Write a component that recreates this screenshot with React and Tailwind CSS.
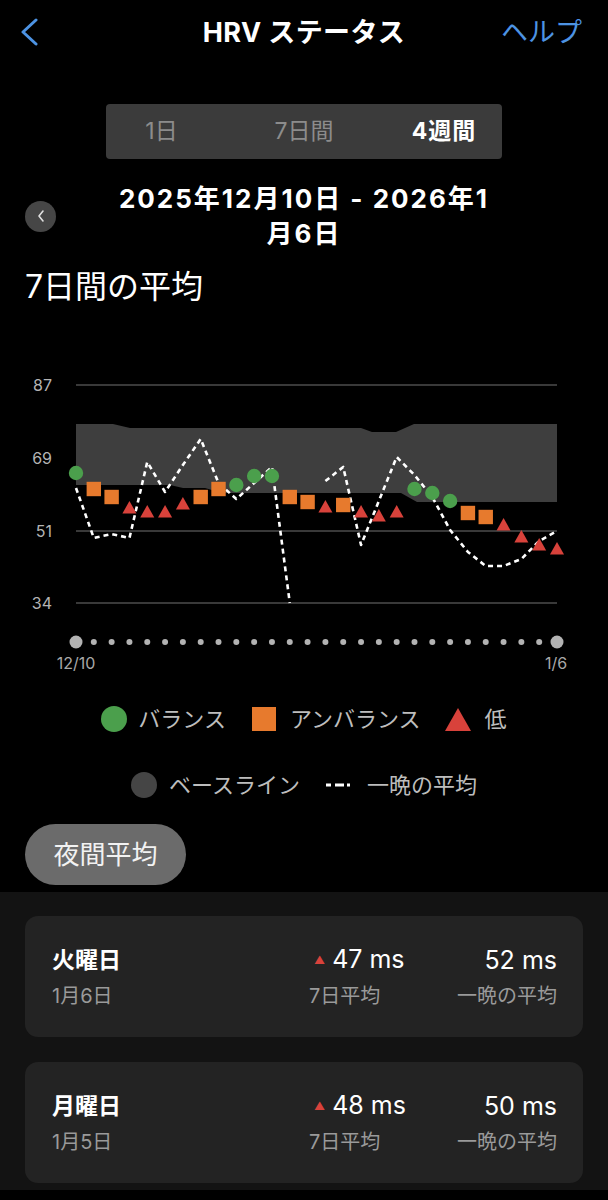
import React from "react";

const X = (i) => 76 + (i * 481) / 27;

// marker type + y position per day (12/10 .. 1/6)
const MARKERS = [
    ["c", 473], ["s", 489], ["s", 497], ["t", 508], ["t", 512], ["t", 512], ["t", 504],
    ["s", 497], ["s", 489], ["c", 485], ["c", 476], ["c", 476], ["s", 497], ["s", 502],
    ["t", 507], ["s", 505], ["t", 512], ["t", 516], ["t", 512], ["c", 489], ["c", 493],
    ["c", 501], ["s", 513], ["s", 517], ["t", 525], ["t", 537], ["t", 545], ["t", 549],
];

const NIGHT_A = [488, 538, 534, 538, 462, 492, 465, 439, 483, 499, 483, 467, 603];
const NIGHT_B = [481, 467, 545, 501, 457, 475, 497, 530, 552, 566, 566, 559, 541, 531];

const BAND =
    "76,424 113,424 130,428 361,428 372,432 396,432 414,424 557,424 557,502 417,502 401,493 222,493 205,488 183,488 170,485 76,485";

const Marker = ({ type, cx, cy }) => {
    if (type === "c") return <circle cx={cx} cy={cy} r="7.2" fill="#4b9f4c" />;
    if (type === "s") return <rect x={cx - 7.2} y={cy - 7.2} width="14.4" height="14.4" fill="#e77a2d" />;
    return <polygon points={`${cx},${cy - 7} ${cx + 7},${cy + 5.5} ${cx - 7},${cy + 5.5}`} fill="#d8423b" />;
};

const Chart = () => {
    const lineA = NIGHT_A.map((y, i) => `${X(i)},${y}`).join(" ");
    const lineB = NIGHT_B.map((y, i) => `${X(i + 14)},${y}`).join(" ");
    return (
        <svg width="608" height="374" viewBox="0 306 608 374" className="block">
            {/* grid */}
            {[385, 531, 603].map((y) => (
                <line key={y} x1="76" x2="557" y1={y} y2={y} stroke="#4d4d4d" strokeWidth="1.5" />
            ))}
            {[["87", 385], ["69", 458], ["51", 531], ["34", 603]].map(([t, y]) => (
                <text key={t} x="52" y={y + 6} textAnchor="end" fill="#b4b4b4" fontSize="16" fontFamily="Inter, sans-serif">
                    {t}
                </text>
            ))}
            {/* baseline band */}
            <polygon points={BAND} fill="#3e3e3e" />
            {/* nightly average */}
            <polyline points={lineA} fill="none" stroke="#ffffff" strokeWidth="2.6" strokeDasharray="5 4" strokeLinejoin="round" />
            <polyline points={lineB} fill="none" stroke="#ffffff" strokeWidth="2.6" strokeDasharray="5 4" strokeLinejoin="round" />
            {/* markers */}
            {MARKERS.map(([t, y], i) => (
                <Marker key={i} type={t} cx={X(i)} cy={y} />
            ))}
            {/* day dots */}
            {MARKERS.map((_, i) => (
                <circle key={i} cx={X(i)} cy="642" r={i === 0 || i === 27 ? 6.5 : 3} fill="#b3b3b3" />
            ))}
            <text x="76" y="669" textAnchor="middle" fill="#a8a8a8" fontSize="16" fontFamily="Inter, sans-serif">12/10</text>
            <text x="556" y="669" textAnchor="middle" fill="#a8a8a8" fontSize="16" fontFamily="Inter, sans-serif">1/6</text>
        </svg>
    );
};

const DayCard = ({ day, date, avg7, night }) => (
    <div className="h-[121px] rounded-[13px] bg-[#232323] pl-[27px] pr-[26px] pt-[29px] flex">
        <div className="flex-1">
            <div className="text-[23px] leading-[30px] font-bold text-white">{day}</div>
            <div className="mt-[8px] text-[20px] leading-[26px] text-[#9a9a9a]">{date}</div>
        </div>
        <div className="w-[148px]">
            <div className="flex items-center h-[30px] text-[25px] text-white">
                <span className="ml-[5px] mr-[7px] text-[11px] text-[#d8423b]">▲</span>
                {avg7} ms
            </div>
            <div className="mt-[8px] text-[20px] leading-[26px] text-[#9a9a9a]">7日平均</div>
        </div>
        <div className="text-right">
            <div className="h-[30px] leading-[30px] text-[25px] text-white">{night} ms</div>
            <div className="mt-[8px] text-[20px] leading-[26px] text-[#9a9a9a]">一晩の平均</div>
        </div>
    </div>
);

const App = () => {
    return (
        <div className="min-h-[1200px] bg-black text-white font-[family-name:Inter,'Noto_Sans_CJK_JP',sans-serif]">
            {/* Header */}
            <header className="h-[66px] grid grid-cols-[1fr_auto_1fr] items-center pl-[20px] pr-[26px]">
                <svg width="20" height="28" viewBox="0 0 20 28" className="mt-[-2px]">
                    <polyline points="16,2 3,14 16,26" fill="none" stroke="#4d93e3" strokeWidth="3" strokeLinecap="round" strokeLinejoin="round" />
                </svg>
                <h1 className="ml-[6px] text-[27px] font-bold tracking-[0.4px]">HRV ステータス</h1>
                <span className="justify-self-end text-[27px] text-[#4d93e3]">ヘルプ</span>
            </header>

            {/* Range tabs */}
            <div className="mt-[38px] flex justify-center">
                <div className="w-[396px] h-[55px] rounded-[4px] bg-[#3b3b3b] flex items-center text-[23px]">
                    <span className="w-[111px] text-center text-[#8c8c8c]">1日</span>
                    <span className="w-[174px] text-center text-[#8c8c8c]">7日間</span>
                    <span className="w-[106px] text-center font-bold tracking-[1px] text-white">4週間</span>
                </div>
            </div>

            {/* Date range */}
            <div className="mt-[22px] flex items-center px-[25px]">
                <button className="w-[31px] h-[31px] rounded-full bg-[#464646] flex items-center justify-center">
                    <svg width="10" height="14" viewBox="0 0 10 14">
                        <polyline points="7,2 3,7 7,12" fill="none" stroke="#e0e0e0" strokeWidth="1.6" strokeLinecap="round" strokeLinejoin="round" />
                    </svg>
                </button>
                <div className="flex-1 text-center text-[26px] leading-[35px] font-bold tracking-[2px]">
                    2025年12月10日 - 2026年1
                    <br />
                    月6日
                </div>
                <div className="w-[31px]" />
            </div>

            <h2 className="mt-[17px] pl-[25px] text-[32px] leading-[38px]">7日間の平均</h2>

            <Chart />

            {/* Legend */}
            <div className="mt-[24px] flex items-center justify-center h-[30px] text-[22px] text-[#bdbdbd]">
                <span className="w-[26px] h-[26px] rounded-full bg-[#4b9f4c]" />
                <span className="ml-[11px]">バランス</span>
                <span className="ml-[26px] w-[24px] h-[24px] bg-[#e77a2d]" />
                <span className="ml-[14px]">アンバランス</span>
                <svg width="26" height="23" viewBox="0 0 26 23" className="ml-[24px]">
                    <polygon points="13,0 26,23 0,23" fill="#d8423b" />
                </svg>
                <span className="ml-[14px]">低</span>
            </div>
            <div className="mt-[36px] flex items-center justify-center h-[30px] text-[22px] text-[#bdbdbd]">
                <span className="w-[26px] h-[26px] rounded-full bg-[#454545]" />
                <span className="ml-[12px]">ベースライン</span>
                <svg width="24" height="4" viewBox="0 0 24 4" className="ml-[26px]">
                    <line x1="0" x2="24" y1="2" y2="2" stroke="#ffffff" strokeWidth="3" strokeDasharray="5 4 9 3" />
                </svg>
                <span className="ml-[17px]">一晩の平均</span>
            </div>

            {/* Toggle pill */}
            <div className="mt-[24px] pl-[25px]">
                <div className="inline-flex items-center justify-center w-[161px] h-[61px] rounded-full bg-[#6b6b6b] text-[26px] text-[#f2f2f2]">
                    夜間平均
                </div>
            </div>

            {/* Daily list */}
            <section className="mt-[7px] bg-[#131313] px-[25px] pt-[24px] pb-[7px] flex flex-col gap-[25px]">
                <DayCard day="火曜日" date="1月6日" avg7="47" night="52" />
                <DayCard day="月曜日" date="1月5日" avg7="48" night="50" />
            </section>
        </div>
    );
};

export default App;
